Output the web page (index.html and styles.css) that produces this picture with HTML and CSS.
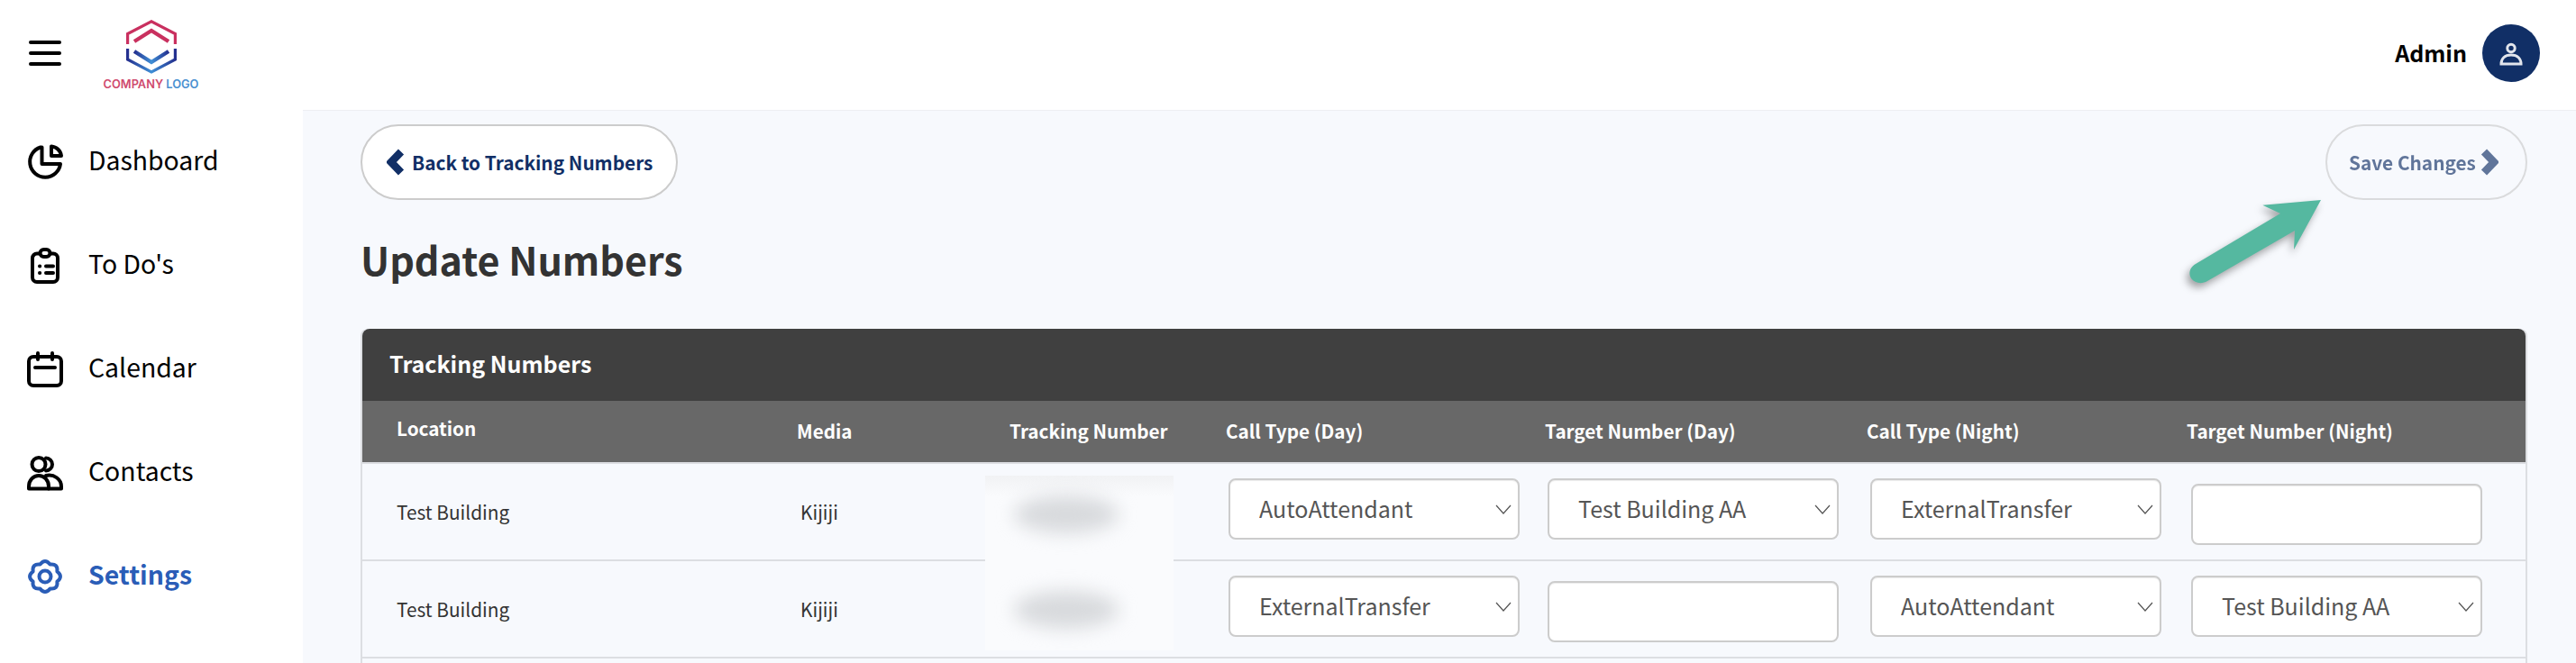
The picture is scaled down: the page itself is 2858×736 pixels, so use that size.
FILE: index.html
```html
<!DOCTYPE html>
<html lang="en">
<head>
<meta charset="utf-8">
<title>Update Numbers</title>
<link rel="stylesheet" href="styles.css">
</head>
<body>
<header class="topbar">
  <button class="burger" aria-label="Menu"><span></span><span></span><span></span></button>
  <div class="logo">
    <svg class="logo-mark" viewBox="0 0 56 60" width="56" height="60">
      <defs>
        <linearGradient id="lb" x1="0" x2="1" y1="0" y2="0"><stop offset="0" stop-color="#24308f"/><stop offset=".5" stop-color="#3f8fd6"/><stop offset="1" stop-color="#24308f"/></linearGradient>
      </defs>
      <g fill="none" stroke-width="3.2">
        <path d="M1.6 27V15.5L28 1.8 54.400 15.500V27" stroke="#c9305f"/>
        <path d="M9 24 28 12 47 24" stroke="#c9305f" stroke-width="4.400"/>
        <path d="M1.600 32V44L28 58 54.400 44V32" stroke="url(#lb)"/>
        <path d="M9 35 28 47 47 35" stroke="url(#lb)" stroke-width="4.400"/>
      </g>
    </svg>
    <div class="logo-text"><span class="logo-red">COMPANY</span> <span class="logo-blue">LOGO</span></div>
  </div>
  <div class="user">
    <span class="user-name">Admin</span>
    <span class="avatar">
      <svg viewBox="0 0 32 32" width="32" height="32" fill="none" stroke="#fff" stroke-width="3" opacity=".88"><circle cx="16" cy="10.500" r="4.200"/><path d="M5 28c0-6 4-10 11-10s11 4 11 10z"/></svg>
    </span>
  </div>
</header>
<div class="shell">
  <aside class="sidebar">
    <nav class="nav">
      <a class="nav-item">
        <svg class="nav-icon" viewBox="0 0 40 40"><path d="M15 3.500A17 17 0 1 0 37 22H16.500V3.500"/><path d="M27 2.500V13H38A12 12 0 0 0 27 2.500Z"/></svg>
        <span class="nav-label">Dashboard</span>
      </a>
      <a class="nav-item">
        <svg class="nav-icon" viewBox="0 0 40 40"><path d="M14 6.500H11A5 5 0 0 0 6 11.500V33A5 5 0 0 0 11 38H29A5 5 0 0 0 34 33V11.500A5 5 0 0 0 29 6.500H26"/><rect x="14.500" y="2" width="11" height="8" rx="4"/><path d="M14 20.500H14.200M21 20.500H29M14 28H14.200M21 28H29"/></svg>
        <span class="nav-label">To Do's</span>
      </a>
      <a class="nav-item">
        <svg class="nav-icon" viewBox="0 0 40 40"><rect x="2" y="6" width="36" height="32" rx="5"/><path d="M12 2V9M28 2V9M9 18H31"/></svg>
        <span class="nav-label">Calendar</span>
      </a>
      <a class="nav-item">
        <svg class="nav-icon" viewBox="0 0 40 40"><circle cx="13" cy="10.500" r="7.500"/><path d="M21 3.500A7 7 0 1 1 21 17.500"/><path d="M2 37.500V35C2 28 7 23 13 23S24 28 24 35V37.500Z"/><path d="M21 23C30 21 38 27 38 35V37.500H24"/></svg>
        <span class="nav-label">Contacts</span>
      </a>
      <a class="nav-item is-active">
        <svg class="nav-icon" viewBox="0 0 40 40"><path d="M14.450 6.600Q20 -.5 25.550 6.600Q34.500 5.500 33.400 14.450Q40.500 20 33.400 25.550Q34.500 34.500 25.550 33.400Q20 40.500 14.450 33.400Q5.500 34.500 6.600 25.550Q-.5 20 6.600 14.450Q5.500 5.500 14.450 6.600Z"/><circle cx="20" cy="20" r="6.500"/></svg>
        <span class="nav-label">Settings</span>
      </a>
    </nav>
  </aside>
  <main class="main">
    <div class="actions">
      <button class="pill pill-back">
        <svg class="chev" viewBox="0 0 20 30" width="20" height="30"><path d="M16 3.500 5 15 16 26.500" /></svg>
        Back to Tracking Numbers
      </button>
      <button class="pill pill-save">
        Save Changes
        <svg class="chev" viewBox="0 0 20 30" width="20" height="30"><path d="M4 3.500 15 15 4 26.500"/></svg>
      </button>
    </div>
    <h1 class="title">Update Numbers</h1>
    <section class="card">
      <div class="card-title">Tracking Numbers</div>
      <div class="row row-head">
        <div class="th th-loc">Location</div>
        <div class="th th-media">Media</div>
        <div class="th th-track">Tracking Number</div>
        <div class="th th-c4">Call Type (Day)</div>
        <div class="th th-c4">Target Number (Day)</div>
        <div class="th th-c6">Call Type (Night)</div>
        <div class="th th-c7">Target Number (Night)</div>
      </div>
      <div class="row row-body">
        <div class="td td-loc">Test Building</div>
        <div class="td td-media">Kijiji</div>
        <div class="td-blank"></div>
        <div class="cell"><select class="field"><option>AutoAttendant</option></select></div>
        <div class="cell"><select class="field"><option>Test Building AA</option></select></div>
        <div class="cell"><select class="field"><option>ExternalTransfer</option></select></div>
        <div class="cell"><input class="field field-input" type="text"></div>
      </div>
      <div class="row row-body">
        <div class="td td-loc">Test Building</div>
        <div class="td td-media">Kijiji</div>
        <div class="td-blank"></div>
        <div class="cell"><select class="field"><option>ExternalTransfer</option></select></div>
        <div class="cell"><input class="field field-input" type="text"></div>
        <div class="cell"><select class="field"><option>AutoAttendant</option></select></div>
        <div class="cell"><select class="field"><option>Test Building AA</option></select></div>
      </div>
      <div class="row-rest"></div>
      <div class="redact"><span class="blob blob-1"></span><span class="blob blob-2"></span></div>
    </section>
    <svg class="callout" viewBox="0 0 170 110" width="170" height="110">
      <path d="M149 5 84.300 10.700 104 20 10 76C3 80 2 87 5 92 9 97 16 99 23 95L120 39 119 60Z" fill="#55b8a0"/>
    </svg>
  </main>
</div>
</body>
</html>
```
FILE: styles.css
```css
* { box-sizing: border-box; }
html, body { margin: 0; height: 736px; overflow: hidden; }
body {
  font-family: "Noto Sans CJK SC", "Source Sans Pro", "Noto Sans", sans-serif;
  background: #fff;
  color: #000;
}
.topbar {
  height: 122px;
  display: flex;
  align-items: center;
  background: #fff;
  padding-left: 32px;
  padding-right: 40px;
}
.burger {
  width: 36px;
  padding: 0;
  border: 0;
  background: none;
  display: flex;
  flex-direction: column;
  gap: 7.500px;
  margin-top: -4px;
}
.burger span { display: block; height: 4.500px; background: #000; border-radius: 3px; }
.logo {
  margin-left: 46px;
  width: 107px;
  display: flex;
  flex-direction: column;
  align-items: center;
}
.logo-mark { display: block; }
.logo-text {
  margin-top: 5px;
  font-family: "Inter", sans-serif;
  font-weight: 600;
  font-size: 12.800px;
  line-height: 14px;
  white-space: nowrap;
}
.logo-red { color: #cf4a6e; }
.logo-blue { color: #4a90d0; }
.user { margin-left: auto; display: flex; align-items: center; gap: 17px; margin-top: -4px; }
.user-name { font-size: 25px; font-weight: 700; line-height: 32px; margin-top: -2px; }
.avatar {
  width: 64px;
  height: 64px;
  border-radius: 50%;
  background: #112f66;
  display: flex;
  align-items: center;
  justify-content: center;
}
.shell { display: flex; height: 614px; }
.sidebar { width: 336px; flex: none; background: #fff; }
.nav { display: flex; flex-direction: column; }
.nav-item {
  height: 115px;
  display: flex;
  align-items: center;
  gap: 28px;
  padding-left: 30px;
  font-size: 28.400px;
  line-height: 40px;
  color: #000;
}
.nav-label { margin-top: -5px; }
.nav-icon {
  width: 40px;
  height: 40px;
  flex: none;
  fill: none;
  stroke: #000;
  stroke-width: 4;
  stroke-linejoin: round;
  stroke-linecap: round;
  overflow: visible;
}
.is-active { color: #2a5db7; font-weight: 700; }
.is-active .nav-icon { stroke: #2a5db7; }
.main {
  flex: 1;
  position: relative;
  background: #f7f9fd;
  box-shadow: inset 0 1px 0 #eeeff2;
  padding: 16px 54px 0 64px;
  min-width: 0;
}
.actions { display: flex; justify-content: space-between; }
.pill {
  height: 84px;
  border-radius: 42px;
  border: 2px solid #cccccc;
  background: #fff;
  font-family: inherit;
  font-weight: 700;
  font-size: 20.800px;
  display: flex;
  align-items: center;
  padding: 0;
}
.pill-back { width: 352px; padding-left: 27px; gap: 8px; color: #112f66; }
.pill-save { width: 224px; padding-left: 24px; gap: 5px; color: #112f66; opacity: .65; background: #f7f9fd; }
.chev { fill: none; stroke: currentColor; stroke-width: 8.500; flex: none; }
.title {
  margin: 32px 0 0 0;
  font-size: 43px;
  line-height: 66px;
  font-weight: 700;
  color: #333;
}
.card {
  position: relative;
  margin-top: 45px;
  border-left: 2px solid #dcdee2;
  border-right: 2px solid #dcdee2;
  border-radius: 8px 8px 0 0;
  background: #f7f9fd;
}
.card-title {
  height: 80px;
  background: #404040;
  color: #fff;
  font-size: 25px;
  font-weight: 700;
  line-height: 77px;
  padding-left: 30px;
  border-radius: 8px 8px 0 0;
}
.row {
  display: grid;
  grid-template-columns: 480px 211px 270px 354px 358px 356px 1fr;
}
.row-head {
  height: 70px;
  background: #686868;
  border-bottom: 2px solid #dcdee2;
  align-items: center;
}
.th { color: #fff; font-size: 20.700px; font-weight: 700; line-height: 28px; white-space: nowrap; margin-top: -2px; }
.th-loc { padding-left: 38px; margin-top: -9px; }
.th-media { padding-left: 2px; }
.th-track { padding-left: 27px; }
.th-c4 { margin-left: -3px; }
.th-c6 { margin-left: -4px; }
.th-c7 { margin-left: -5px; }
.row-body { height: 108px; border-bottom: 2px solid #dcdee2; }
.row-rest { height: 40px; }
.td { font-size: 20.800px; line-height: 28px; color: #333; align-self: center; }
.td-loc { padding-left: 38px; }
.td-media { padding-left: 6px; }
.cell { padding-top: 16px; }
.field {
  display: block;
  width: 323px;
  height: 68px;
  border: 2px solid #cccccc;
  border-radius: 8px;
  background: #fff;
  box-shadow: inset 0 1px 1px rgba(0,0,0,.075);
  font-family: inherit;
  font-size: 25px;
  color: #555;
  padding: 0 0 3px 32px;
  appearance: none;
  -webkit-appearance: none;
  background-image: url("data:image/svg+xml,%3Csvg xmlns='http://www.w3.org/2000/svg' width='18' height='11'%3E%3Cpath d='M1 1l8 9 8-9' fill='none' stroke='%23555' stroke-width='1.200'/%3E%3C/svg%3E");
  background-repeat: no-repeat;
  background-position: right 7px center;
}
.field-input { background-image: none; margin-top: 6px; }
.redact {
  position: absolute;
  left: 691px;
  top: 163px;
  width: 209px;
  height: 194px;
  background: linear-gradient(#f1f2f4, #fafbfd 12%, #fafbfd);
  overflow: hidden;
}
.blob {
  position: absolute;
  left: 32px;
  width: 116px;
  height: 42px;
  border-radius: 50%;
  background: #d8dadd;
  filter: blur(10px);
}
.blob-1 { top: 22px; }
.blob-2 { top: 128px; }
.callout {
  position: absolute;
  left: 2090px;
  top: 95px;
  overflow: visible;
  filter: drop-shadow(-3px 5px 4px rgba(0,0,0,.35));
}
```
